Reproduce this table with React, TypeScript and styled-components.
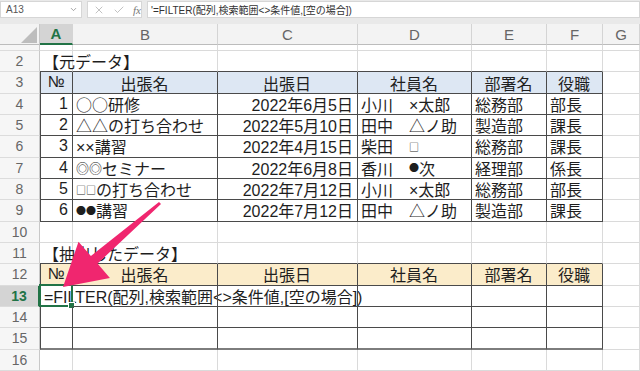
import React from "react";
import styled, { createGlobalStyle } from "styled-components";
import { X, Check, ChevronDown } from "lucide-react";

const GlobalStyle = createGlobalStyle`
  html, body {
    margin: 0;
    padding: 0;
    background: #ffffff;
  }
  body {
    font-family: "Liberation Sans", "Noto Sans CJK JP", sans-serif;
  }
`;

const COL_WIDTHS = [40, 33, 145, 140, 114, 75, 56, 37];
const LETTERS = ["A", "B", "C", "D", "E", "F", "G"];
const ROWS = [1, 2, 3, 4, 5, 6, 7, 8, 9, 10, 11, 12, 13, 14, 15, 16];
const SELECTED_ROW = 13;
const SELECTED_COL = 1;

const Page = styled.div`
  position: relative;
  width: 640px;
  height: 371px;
  overflow: hidden;
  background: #ffffff;
`;

const FormulaBar = styled.div`
  display: flex;
  gap: 5px;
  height: 24px;
  padding: 1px 0 6px 0;
  box-sizing: border-box;
  background: #e9e9e9;
`;

const Box = styled.div`
  display: flex;
  align-items: center;
  background: #ffffff;
  border: 1px solid #d6d6d6;
  box-sizing: border-box;
  height: 17px;
  font-size: 10px;
  color: #333;
`;

const NameBox = styled(Box)`
  width: 82px;
  justify-content: space-between;
  padding: 0 3px 0 5px;
  color: #555;
`;

const IconBox = styled(Box)`
  width: 55px;
  gap: 8px;
  padding-left: 5px;
  color: #a8a8a8;
`;

const Fx = styled.span`
  font-family: "Liberation Serif", serif;
  font-style: italic;
  font-size: 11px;
  color: #777;
`;

const FormulaInput = styled(Box)`
  flex: 1;
  padding-left: 3px;
  white-space: nowrap;
`;

const Grid = styled.div`
  display: grid;
  grid-template-columns: ${COL_WIDTHS.map((w) => `${w}px`).join(" ")};
  grid-template-rows: 21px 6px repeat(15, 21.33px);
`;

const ColHeader = styled.div<{ $selected?: boolean }>`
  box-sizing: border-box;
  display: flex;
  align-items: center;
  justify-content: center;
  font-size: 15px;
  color: ${({ $selected }) => ($selected ? "#217346" : "#666")};
  font-weight: ${({ $selected }) => ($selected ? "bold" : "normal")};
  background: ${({ $selected }) => ($selected ? "#d4d4d4" : "#f3f3f3")};
  border-right: 1px solid #d4d4d4;
  border-bottom: ${({ $selected }) => ($selected ? "2px solid #217346" : "1px solid #bcbcbc")};
`;

const Corner = styled.div`
  box-sizing: border-box;
  background: #f3f3f3;
  border-right: 1px solid #c8c8c8;
  border-bottom: 1px solid #bcbcbc;
  position: relative;
  &::after {
    content: "";
    position: absolute;
    inset: 0;
    background: #bdbdbd;
    clip-path: polygon(37px 3px, 37px 19px, 21px 19px);
  }
`;

const RowHeader = styled.div<{ $selected?: boolean }>`
  box-sizing: border-box;
  display: flex;
  align-items: center;
  justify-content: center;
  font-size: 14px;
  overflow: hidden;
  color: ${({ $selected }) => ($selected ? "#217346" : "#666")};
  font-weight: ${({ $selected }) => ($selected ? "bold" : "normal")};
  background: ${({ $selected }) => ($selected ? "#d4d4d4" : "#f6f6f6")};
  border-right: ${({ $selected }) => ($selected ? "2px solid #217346" : "1px solid #c8c8c8")};
  border-bottom: 1px solid #dcdcdc;
`;

type Edge = "grid" | "dark" | "thick";

const edgeCss = (e: Edge) =>
  e === "thick" ? "2px solid #7d7d7d" : e === "dark" ? "1px solid #4a4a4a" : "1px solid #dadada";

const Cell = styled.div<{
  $right: Edge;
  $bottom: Edge;
  $left?: boolean;
  $fill?: string;
  $align: "left" | "right" | "center";
}>`
  position: relative;
  box-sizing: border-box;
  display: flex;
  align-items: center;
  justify-content: ${({ $align }) =>
    $align === "right" ? "flex-end" : $align === "center" ? "center" : "flex-start"};
  padding: 0 4px 0 3px;
  font-size: 16px;
  color: #1e1e1e;
  white-space: nowrap;
  background: ${({ $fill }) => $fill ?? "transparent"};
  border-right: ${({ $right }) => edgeCss($right)};
  border-bottom: ${({ $bottom }) => edgeCss($bottom)};
  border-left: ${({ $left }) => ($left ? "1px solid #4a4a4a" : "none")};
`;

const Selection = styled.div`
  position: absolute;
  inset: -2px -1px -1px -2px;
  border: 2px solid #217346;
  pointer-events: none;
`;

const FillHandle = styled.div`
  position: absolute;
  right: -4px;
  bottom: -4px;
  width: 5px;
  height: 5px;
  background: #217346;
  border: 1px solid #ffffff;
`;

const Sym = styled.span<{ $size: number }>`
  font-size: ${({ $size }) => $size}px;
  font-family: "Noto Sans CJK JP", sans-serif;
`;

const Arrow = styled.svg`
  position: absolute;
  left: 0;
  top: 0;
  pointer-events: none;
`;

type Content = { text: React.ReactNode; align: "left" | "right" | "center" };

const sq = <Sym $size={10}>□</Sym>;
const dot = <Sym $size={10}>●</Sym>;
const ring = <Sym $size={13}>◎</Sym>;
const circle = <Sym $size={16}>○</Sym>;

const HEADERS = ["№", "出張名", "出張日", "社員名", "部署名", "役職"];

const DATA: React.ReactNode[][] = [
  ["1", <>{circle}{circle}研修</>, "2022年6月5日", "小川　×太郎", "総務部", "部長"],
  ["2", "△△の打ち合わせ", "2022年5月10日", "田中　△ノ助", "製造部", "課長"],
  ["3", "××講習", "2022年4月15日", <>柴田　{sq}</>, "総務部", "課長"],
  ["4", <>{ring}{ring}セミナー</>, "2022年6月8日", <>香川　{dot}次</>, "経理部", "係長"],
  ["5", <>{sq}{sq}の打ち合わせ</>, "2022年7月12日", "小川　×太郎", "総務部", "部長"],
  ["6", <>{dot}{dot}講習</>, "2022年7月12日", "田中　△ノ助", "製造部", "課長"],
];

const inTable = (r: number, c: number) =>
  c >= 1 && c <= 6 && ((r >= 3 && r <= 9) || (r >= 12 && r <= 15));

const fillOf = (r: number, c: number) => {
  if (!inTable(r, c)) return undefined;
  if (r === 3) return "#dde7f3";
  if (r === 12) return "#fbecca";
  return undefined;
};

const contentOf = (r: number, c: number): Content | null => {
  if (r === 2 && c === 1) return { text: "【元データ】", align: "left" };
  if (r === 11 && c === 1) return { text: "【抽出したデータ】", align: "left" };
  if (r === 13 && c === 1)
    return { text: "=FILTER(配列,検索範囲<>条件値,[空の場合])", align: "left" };
  if ((r === 3 || r === 12) && c >= 1 && c <= 6) return { text: HEADERS[c - 1], align: "center" };
  if (r >= 4 && r <= 9 && c >= 1 && c <= 6) {
    const v = DATA[r - 4][c - 1];
    const align = c === 1 || c === 3 ? "right" : "left";
    return { text: v, align };
  }
  return null;
};

const App: React.FC = () => {
  return (
    <Page>
      <GlobalStyle />
      <FormulaBar>
        <NameBox>
          A13
          <ChevronDown size={9} color="#888" />
        </NameBox>
        <IconBox>
          <X size={12} strokeWidth={1.4} />
          <Check size={12} strokeWidth={1.4} />
          <Fx>fx</Fx>
        </IconBox>
        <FormulaInput>'=FILTER(配列,検索範囲&lt;&gt;条件値,[空の場合])</FormulaInput>
      </FormulaBar>
      <Grid>
        <Corner />
        {LETTERS.map((l, i) => (
          <ColHeader key={l} $selected={i + 1 === SELECTED_COL}>
            {l}
          </ColHeader>
        ))}
        {ROWS.map((r) => (
          <React.Fragment key={r}>
            <RowHeader $selected={r === SELECTED_ROW}>{r > 1 ? r : ""}</RowHeader>
            {LETTERS.map((l, i) => {
              const c = i + 1;
              const content = contentOf(r, c);
              const right: Edge = inTable(r, c) || inTable(r, c + 1) ? "dark" : "grid";
              const bottom: Edge =
                inTable(r, c) && r === 15
                  ? "thick"
                  : inTable(r, c) || inTable(r + 1, c)
                  ? "dark"
                  : "grid";
              const selected = r === SELECTED_ROW && c === SELECTED_COL;
              return (
                <Cell
                  key={l}
                  $right={right}
                  $bottom={bottom}
                  $left={c === 1 && inTable(r, c)}
                  $fill={fillOf(r, c)}
                  $align={content?.align ?? "left"}
                >
                  {content?.text}
                  {selected && (
                    <Selection>
                      <FillHandle />
                    </Selection>
                  )}
                </Cell>
              );
            })}
          </React.Fragment>
        ))}
      </Grid>
      <Arrow width={640} height={371} viewBox="0 0 640 371">
        <polygon
          points="159,201.9 90.9,256 78.5,241.7 63,287 109.9,277.9 97.5,263.6 161,204.1"
          fill="#f0266f"
          strokeLinejoin="round"
        />
      </Arrow>
    </Page>
  );
};

export default App;
